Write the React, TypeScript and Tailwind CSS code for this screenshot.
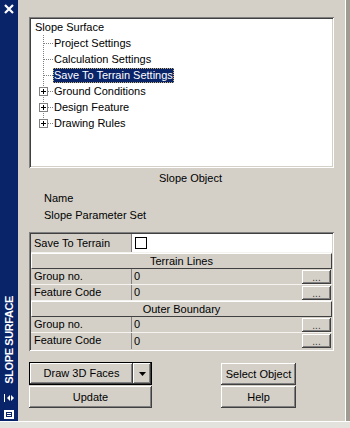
import React from "react";

// Windows-classic 3D edges
const raised =
  "shadow-[inset_-1px_-1px_#404040,inset_1px_1px_#ffffff,inset_-2px_-2px_#808080]";
const sunken =
  "shadow-[inset_1px_1px_#808080,inset_-1px_-1px_#ffffff,inset_2px_2px_#404040,inset_-2px_-2px_#d4d0c8]";

const nodes = [
  { label: "Project Settings" },
  { label: "Calculation Settings" },
  { label: "Save To Terrain Settings", selected: true },
  { label: "Ground Conditions", plus: true },
  { label: "Design Feature", plus: true },
  { label: "Drawing Rules", plus: true, last: true },
];

function Connector({ last, plus }: { last?: boolean; plus?: boolean }) {
  return (
    <svg width="18" height="16" className="shrink-0">
      <line x1="8.5" y1="0" x2="8.5" y2={last ? 8 : 16} stroke="#808080" strokeDasharray="1 1" />
      <line x1="9" y1="8.5" x2="18" y2="8.5" stroke="#808080" strokeDasharray="1 1" />
      {plus && (
        <g>
          <rect x="4.5" y="4.5" width="8" height="8" fill="#fff" stroke="#808080" />
          <line x1="6" y1="8.5" x2="11" y2="8.5" stroke="#000" />
          <line x1="8.5" y1="6" x2="8.5" y2="11" stroke="#000" />
        </g>
      )}
    </svg>
  );
}

function DotsButton() {
  return (
    <div className={`w-[29px] h-[14px] mr-[1px] bg-[#d4d0c8] ${raised} flex items-end justify-center text-[10px] leading-[10px] pb-[1px] text-[#404040]`}>
      ...
    </div>
  );
}

function DataRow({ label, last }: { label: string; last?: boolean }) {
  return (
    <div className={`flex h-[16px] ${last ? "" : "border-b border-[#f4f3ef]"}`}>
      <div className="w-[101px] shrink-0 border-r border-[#808080] pl-[3px] leading-[15px]">{label}</div>
      <div className="flex-1 flex items-center pl-[2px]">
        <span className="flex-1 leading-[15px]">0</span>
        <DotsButton />
      </div>
    </div>
  );
}

function HeaderRow({ title }: { title: string }) {
  return (
    <div className="h-[16px] border-t border-l border-white border-b border-r border-b-[#404040] border-r-[#404040] text-center leading-[14px]">
      {title}
    </div>
  );
}

export default function App() {
  return (
    <div className="w-[350px] h-[428px] flex flex-col bg-[#d4d0c8] overflow-hidden text-[11px] text-black font-['Liberation_Sans',Arial,sans-serif]">
      <div className="flex h-[421px]">
        {/* palette title bar */}
        <div className="w-[18px] shrink-0 bg-[#0a246a] flex flex-col items-center text-white">
          <svg width="10" height="10" viewBox="0 0 10 10" className="mt-[4px]">
            <path d="M1 1 L9 9 M9 1 L1 9" stroke="#fff" strokeWidth="2.2" />
          </svg>
          <div className="flex-1" />
          <div className="[writing-mode:vertical-rl] rotate-180 font-bold text-[11px] leading-[12px] tracking-[-0.4px] whitespace-nowrap">
            SLOPE SURFACE
          </div>
          <svg width="10" height="8" viewBox="0 0 10 8" className="mt-[10px]">
            <line x1="0.5" y1="0" x2="0.5" y2="8" stroke="#fff" />
            <path d="M6 1 L3 4 L6 7 Z" fill="#fff" />
            <path d="M7 1 L10 4 L7 7 Z" fill="#fff" />
          </svg>
          <svg width="10" height="9" viewBox="0 0 10 9" className="mt-[8px] mb-[2px]">
            <rect x="0.5" y="0.5" width="9" height="8" fill="#fff" stroke="#fff" />
            <rect x="2" y="2" width="6" height="5" fill="#0a246a" />
            <line x1="3" y1="3.5" x2="7" y2="3.5" stroke="#fff" />
            <line x1="3" y1="5.5" x2="7" y2="5.5" stroke="#fff" />
          </svg>
        </div>

        {/* palette body */}
        <div className="flex-1 flex border-r-[4px] border-[#a09c94]">
          <div className="flex-1 flex flex-col pl-[11px] border-r border-white">
            <div className={`mt-[17px] w-[305px] h-[151px] bg-white ${sunken} pt-[2px] pl-[6px]`}>
              <div className="h-[16px] leading-[16px]">Slope Surface</div>
              {nodes.map((n) => (
                <div key={n.label} className="flex h-[16px] items-center">
                  <Connector last={n.last} plus={n.plus} />
                  <span
                    className={
                      n.selected
                        ? "bg-[#0a246a] text-white px-[1px] leading-[15px] outline-1 outline-dotted outline-[#c8b070] -outline-offset-1"
                        : "px-[1px] leading-[15px]"
                    }
                  >
                    {n.label}
                  </span>
                </div>
              ))}
            </div>

            <div className="mt-[3px] h-[14px] leading-[14px] pl-[130px]">Slope Object</div>
            <div className="mt-[6px] h-[14px] leading-[14px] pl-[15px]">Name</div>
            <div className="mt-[3px] h-[14px] leading-[14px] pl-[15px]">Slope Parameter Set</div>

            {/* property grid */}
            <div className={`mt-[10px] w-[305px] h-[119px] p-[2px] ${sunken}`}>
              <div className="flex h-[19px] border-b border-[#f4f3ef]">
                <div className="w-[101px] shrink-0 border-r border-[#808080] pl-[3px] leading-[18px]">Save To Terrain</div>
                <div className="flex-1 bg-white pl-[3px] flex items-center">
                  <div className="w-[12px] h-[12px] border border-black bg-white" />
                </div>
              </div>
              <HeaderRow title="Terrain Lines" />
              <DataRow label="Group no." />
              <DataRow label="Feature Code" />
              <HeaderRow title="Outer Boundary" />
              <DataRow label="Group no." />
              <DataRow label="Feature Code" last />
            </div>

            {/* buttons */}
            <div className="mt-[11px] flex">
              <div className="w-[123px] flex flex-col">
                <div className="h-[23px] border border-black flex">
                  <div className={`flex-1 ${raised} flex items-center justify-center`}>Draw 3D Faces</div>
                  <div className={`w-[18px] ${raised} flex items-center justify-center`}>
                    <svg width="7" height="4" viewBox="0 0 7 4">
                      <path d="M0 0 H7 L3.5 4 Z" fill="#000" />
                    </svg>
                  </div>
                </div>
                <div className={`mt-[1px] h-[22px] ${raised} flex items-center justify-center`}>Update</div>
              </div>
              <div className="ml-[69px] w-[75px] flex flex-col pt-[1px]">
                <div className={`h-[22px] ${raised} flex items-center justify-center`}>Select Object</div>
                <div className={`mt-[1px] h-[22px] ${raised} flex items-center justify-center`}>Help</div>
              </div>
            </div>
          </div>
        </div>
      </div>
      <div className="h-[7px] bg-[#e4e2dc] border-t border-white" />
    </div>
  );
}
